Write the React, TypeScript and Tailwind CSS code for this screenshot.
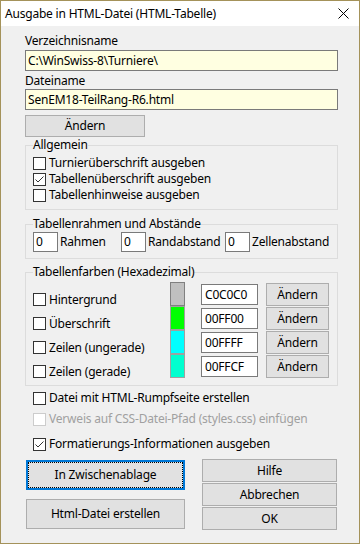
import React from 'react'

const font = { fontFamily: '"Noto Sans", "Segoe UI", sans-serif' }

function CheckBox({ checked = false, disabled = false }: { checked?: boolean; disabled?: boolean }) {
  return (
    <span
      className={`flex h-[13px] w-[13px] shrink-0 items-center justify-center border bg-white ${
        disabled ? 'border-[#cccccc]' : 'border-[#333333]'
      }`}
    >
      {checked && (
        <svg width="11" height="11" viewBox="0 0 11 11">
          <polyline points="1.5,5.5 4,8 9.5,2.5" fill="none" stroke="#333333" strokeWidth="1" />
        </svg>
      )}
    </span>
  )
}

function CheckRow({ label, checked, disabled }: { label: string; checked?: boolean; disabled?: boolean }) {
  return (
    <div className="flex h-4 items-center gap-[3px]">
      <CheckBox checked={checked} disabled={disabled} />
      <span className={`leading-4 whitespace-nowrap ${disabled ? 'text-[#a0a0a0]' : 'text-black'}`}>{label}</span>
    </div>
  )
}

function Button({ label, className = '' }: { label: string; className?: string }) {
  return (
    <div
      className={`flex items-center justify-center border border-[#adadad] bg-[#e1e1e1] leading-4 text-black ${className}`}
    >
      {label}
    </div>
  )
}

const colorRows = [
  { label: 'Hintergrund', swatch: 'bg-[#c0c0c0] border-[#808080]', hex: 'C0C0C0' },
  { label: 'Überschrift', swatch: 'bg-[#00ff00] border-[#a0a0a0]', hex: '00FF00' },
  { label: 'Zeilen (ungerade)', swatch: 'bg-[#00ffff] border-[#a0a0a0]', hex: '00FFFF' },
  { label: 'Zeilen (gerade)', swatch: 'bg-[#00ffcf] border-[#a0a0a0]', hex: '00FFCF' },
]

export default function App() {
  return (
    <div
      className="flex h-[544px] w-[360px] flex-col border border-[#a4925a] bg-[#f0f0f0] text-[12px] tracking-[-0.2px] text-black"
      style={font}
    >
      {/* title bar */}
      <div className="flex h-[25px] shrink-0 items-center justify-between bg-white pl-[4px] pr-[10px]">
        <span className="leading-4">Ausgabe in HTML-Datei (HTML-Tabelle)</span>
        <svg width="11" height="11" viewBox="0 0 11 11">
          <path d="M0.5 0.5 L10.5 10.5 M10.5 0.5 L0.5 10.5" stroke="#000" strokeWidth="1" />
        </svg>
      </div>

      <div className="flex flex-col pl-[24px] pr-[21px]">
        <div className="mt-[7px] h-4 leading-4">Verzeichnisname</div>
        <div className="mt-[1px] flex h-[21px] items-center border border-[#7a7a7a] bg-[#ffffe1] pl-[2px] leading-4">
          C:\WinSwiss-8\Turniere\
        </div>
        <div className="mt-[2px] h-4 leading-4">Dateiname</div>
        <div className="flex h-[21px] items-center border border-[#7a7a7a] bg-[#ffffe1] pl-[2px] leading-4">
          SenEM18-TeilRang-R6.html
        </div>
        <Button label="Ändern" className="mt-[5px] h-[22px] w-[120px]" />

        {/* Allgemein */}
        <fieldset className="border border-[#dcdcdc] pb-[6px] pl-[7px] pt-[2px]">
          <legend className="leading-4">Allgemein</legend>
          <CheckRow label="Turnierüberschrift ausgeben" />
          <CheckRow label="Tabellenüberschrift ausgeben" checked />
          <CheckRow label="Tabellenhinweise ausgeben" />
        </fieldset>

        {/* Rahmen */}
        <fieldset className="mt-[6px] border border-[#dcdcdc] pb-[6px] pl-[7px]">
          <legend className="leading-4">Tabellenrahmen und Abstände</legend>
          <div className="flex">
            {[
              ['Rahmen', 'w-[88px]'],
              ['Randabstand', 'w-[104px]'],
              ['Zellenabstand', ''],
            ].map(([label, w]) => (
              <div key={label} className={`flex items-center gap-[2px] ${w}`}>
                <div className="flex h-[20px] w-[25px] items-center border border-[#7a7a7a] bg-white pl-[2px] leading-4">
                  0
                </div>
                <span className="leading-4">{label}</span>
              </div>
            ))}
          </div>
        </fieldset>

        {/* Farben */}
        <fieldset className="mt-[5px] border border-[#dcdcdc] pb-[7px] pl-[7px] pt-[2px]">
          <legend className="leading-4">Tabellenfarben (Hexadezimal)</legend>
          {colorRows.map((r) => (
            <div key={r.hex} className="flex h-[24px]">
              <div className="flex w-[137px] items-end">
                <div className="flex h-[13px] items-center gap-[3px]">
                  <CheckBox />
                  <span className="leading-4 whitespace-nowrap">{r.label}</span>
                </div>
              </div>
              <div className={`h-[24px] w-[15px] border ${r.swatch}`} />
              <div className="ml-[16px] mt-[2px] flex h-[21px] w-[57px] items-center border border-[#7a7a7a] bg-white pl-[3px] leading-4">
                {r.hex}
              </div>
              <Button label="Ändern" className="ml-[8px] mt-[1px] h-[23px] w-[63px]" />
            </div>
          ))}
        </fieldset>

        <div className="ml-[8px] mt-[4px]">
          <CheckRow label="Datei mit HTML-Rumpfseite erstellen" />
        </div>
        <div className="ml-[8px] mt-[5px]">
          <CheckRow label="Verweis auf CSS-Datei-Pfad (styles.css) einfügen" disabled />
        </div>
        <div className="ml-[8px] mt-[9px]">
          <CheckRow label="Formatierungs-Informationen ausgeben" checked />
        </div>

        <div className="mt-[7px] flex">
          <div className="ml-[1px] mt-[1px] flex w-[159px] flex-col gap-[9px]">
            <div className="h-[30px] border-2 border-[#0078d7] bg-[#e1e1e1]">
              <div className="flex h-full items-center justify-center border border-dotted border-black leading-4">
                In Zwischenablage
              </div>
            </div>
            <Button label="Html-Datei erstellen" className="h-[30px]" />
          </div>
          <div className="ml-[17px] flex w-[135px] flex-col gap-[1px]">
            <Button label="Hilfe" className="h-[23px]" />
            <Button label="Abbrechen" className="h-[23px]" />
            <Button label="OK" className="h-[23px]" />
          </div>
        </div>
      </div>
    </div>
  )
}
